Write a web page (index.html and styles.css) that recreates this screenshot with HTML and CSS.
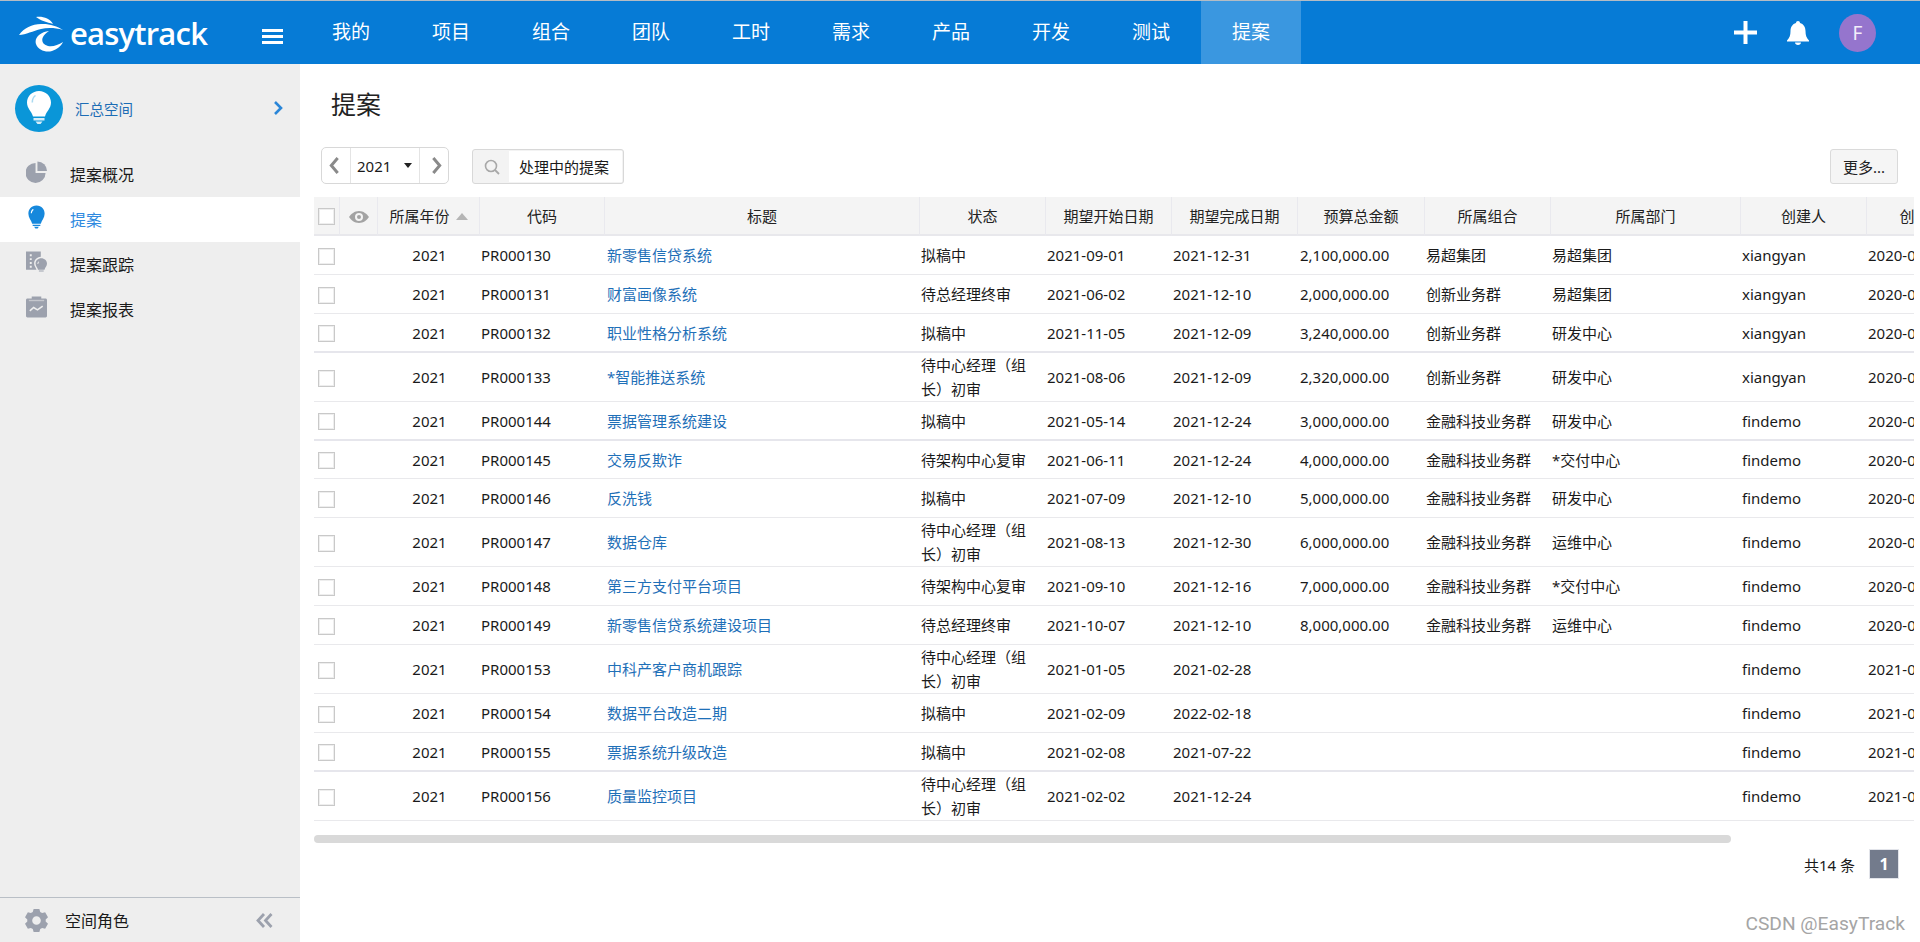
FILE: index.html
```html
<!DOCTYPE html>
<html lang="zh-CN">
<head>
<meta charset="utf-8">
<title>提案 - EasyTrack</title>
<link rel="stylesheet" href="styles.css">
</head>
<body>
<div class="app">
  <header class="topbar">
    <div class="brand">
      <svg class="brand-mark" viewBox="0 0 44 36" aria-hidden="true">
        <path fill="#fff" d="M17 1C23 0 31 2 34 8 28 6 22 5 17 1Z"/>
        <path fill="#fff" d="M0 19C5 12 13 8 22 8 30 7.500 38 10 44 14 36 11.500 28 11.500 22 13 14 15 7 18.500 0 19Z"/>
        <path fill="#fff" d="M30 15C21 16 15 22 17 28 19 34 27 37 33 35 38 33.500 42 30 44 26 39 29 34 31 29 30 24 29 22 25 24 21 25 19 27 17 30 15Z"/>
      </svg>
      <span class="brand-name">easytrack</span>
    </div>
    <button class="burger" aria-label="菜单"><i></i><i></i><i></i></button>
    <nav class="mainnav">
      <a class="nav-item">我的</a>
      <a class="nav-item">项目</a>
      <a class="nav-item">组合</a>
      <a class="nav-item">团队</a>
      <a class="nav-item">工时</a>
      <a class="nav-item">需求</a>
      <a class="nav-item">产品</a>
      <a class="nav-item">开发</a>
      <a class="nav-item">测试</a>
      <a class="nav-item is-active">提案</a>
    </nav>
    <div class="top-actions">
      <svg class="icon-plus" viewBox="0 0 23 23" aria-hidden="true"><path fill="#fff" d="M9.500 0h4v9.500H23v4h-9.500V23h-4v-9.500H0v-4h9.500Z"/></svg>
      <svg class="icon-bell" viewBox="0 0 22 24" aria-hidden="true"><path fill="#fff" d="M11 0c1.200 0 2 .8 2 1.900C16.500 2.800 18.500 6 18.500 10c0 4.500 1 7 3.500 9.500v1H0v-1C2.500 17 3.500 14.500 3.500 10 3.500 6 5.500 2.800 9 1.900 9 .8 9.800 0 11 0ZM8 21.500h6C14 23 12.700 24 11 24s-3-1-3-2.500Z"/></svg>
      <span class="avatar">F</span>
    </div>
  </header>

  <div class="body">
    <aside class="sidebar">
      <div class="space">
        <span class="space-icon">
          <svg viewBox="0 0 24 34" aria-hidden="true">
            <path fill="#fff" d="M12 0C5.500 0 0 5 0 11.500 0 17.500 4.500 20 6 25.500h12C19.500 20 24 17.500 24 11.500 24 5 18.500 0 12 0Z"/>
            <path fill="#0a96d8" opacity=".35" d="M8 4c-2 1.500-3.500 4-3.500 7.500h1.600C6 8.500 7 6 9 5Z"/>
            <path fill="#d7eef9" d="M6.500 27h11v2.500h-11ZM8.500 30.500h7L13.500 33h-3Z"/>
          </svg>
        </span>
        <span class="space-name">汇总空间</span>
        <svg class="space-arrow" viewBox="0 0 10 14" aria-hidden="true"><path fill="none" stroke="#2a86d8" stroke-width="2.600" d="M2 1l6 6-6 6"/></svg>
      </div>
      <ul class="menu">
        <li class="menu-item">
          <svg class="menu-icon" viewBox="0 0 22 22" aria-hidden="true"><path fill="#9ca1ad" d="M10 1.500V12h10.500A10.500 10.500 0 1 1 10 1.500Z"/><path fill="#9ca1ad" d="M12 0a10 10 0 0 1 10 10H12Z"/></svg>
          提案概况
        </li>
        <li class="menu-item is-active">
          <svg class="menu-icon" viewBox="0 0 22 24" aria-hidden="true"><path fill="#1688dc" d="M11 0C5.500 0 2.500 4 2.500 8.500c0 4 3 7 4 10.500h9c1-3.500 4-6.500 4-10.500C19.500 4 16.500 0 11 0Z"/><path fill="#fff" d="M7 3.500C5.500 4.800 5 6.500 5 8h1.200c.1-1.500.8-3 2-3.700Z"/><path fill="#1688dc" d="M7 20.200h8v1.300H7ZM8.500 22.300h5L12.200 24h-2.400Z"/></svg>
          提案
        </li>
        <li class="menu-item">
          <svg class="menu-icon" viewBox="0 0 22 22" aria-hidden="true"><path fill="#9ca1ad" d="M0 0h15.500v5.500C11 6 8.500 9 8.500 12.500c0 2.500 1.500 4 2.500 6.500H0Z"/><path fill="#eee" d="M4 3h2v2H4ZM4 7h2v2H4ZM4 11h2v2H4ZM4 15h2v2H4Z"/><path fill="#9ca1ad" d="M16 7c3.300 0 6 2.400 6 5.500 0 2.700-2 4-2.600 6.500h-6.800C12 16.500 10 15.200 10 12.500 10 9.400 12.700 7 16 7ZM13.500 20h5v1h-5Z"/><path fill="#eee" d="M13 10.500c-.8.800-1 1.800-1 2.500h.9c0-.8.300-1.500 1-2Z"/></svg>
          提案跟踪
        </li>
        <li class="menu-item">
          <svg class="menu-icon" viewBox="0 0 22 22" aria-hidden="true"><path fill="#9ca1ad" d="M1.500 2H6V0h10v2h4.500c.8 0 1.500.7 1.500 1.500v17c0 .8-.7 1.500-1.500 1.500h-19C.7 22 0 21.300 0 20.500v-17C0 2.700.7 2 1.500 2Z"/><path fill="none" stroke="#eee" stroke-width="1.500" d="M3 4.200h16" opacity=".5"/><path fill="none" stroke="#eee" stroke-width="1.700" d="M4 15l4-3.500 4 2.500 5.500-4"/></svg>
          提案报表
        </li>
      </ul>
      <div class="side-foot">
        <svg class="gear" viewBox="0 0 24 24" aria-hidden="true"><path fill="#9ca1ad" fill-rule="evenodd" d="M9 0h6l.9 3.200 2 1.100L21 3.400l3 5.200-2.400 2.300v2.200l2.400 2.300-3 5.200-3.100-.9-2 1.100L15 24H9l-.9-3.200-2-1.100L3 20.600l-3-5.200 2.400-2.300v-2.200L0 8.600l3-5.200 3.100.9 2-1.100ZM12 7.500a4.500 4.500 0 1 0 0 9 4.500 4.500 0 0 0 0-9Z"/></svg>
        <span class="foot-label">空间角色</span>
        <svg class="collapse" viewBox="0 0 17 15" aria-hidden="true"><path fill="none" stroke="#9ca1ad" stroke-width="2.800" d="M8 1L2 7.500 8 14M15.500 1L9.500 7.500l6 6.500"/></svg>
      </div>
    </aside>

    <main class="content">
      <h1 class="page-title">提案</h1>
      <div class="toolbar">
        <div class="stepper">
          <span class="step step-prev"><svg viewBox="0 0 10 16" aria-hidden="true"><path fill="none" stroke="#8a8a8a" stroke-width="2.800" d="M8 1L2 8l6 7"/></svg></span>
          <span class="step-value">2021<i class="caret"></i></span>
          <span class="step step-next"><svg viewBox="0 0 10 16" aria-hidden="true"><path fill="none" stroke="#8a8a8a" stroke-width="2.800" d="M2 1l6 7-6 7"/></svg></span>
        </div>
        <div class="search">
          <span class="search-icon"><svg viewBox="0 0 16 16" aria-hidden="true"><circle cx="7" cy="7" r="5.500" fill="none" stroke="#a8a8a8" stroke-width="1.600"/><path stroke="#a8a8a8" stroke-width="1.800" d="M11 11l4 4"/></svg></span>
          <span class="search-text">处理中的提案</span>
        </div>
        <button class="more">更多...</button>
      </div>

      <div class="table-wrap">
        <table class="grid">
          <colgroup>
            <col class="c-check"><col class="c-eye"><col class="c-year"><col class="c-code"><col class="c-title">
            <col class="c-std"><col class="c-std"><col class="c-std"><col class="c-budget"><col class="c-std">
            <col class="c-dept"><col class="c-std"><col class="c-std">
          </colgroup>
          <thead>
            <tr>
              <th class="chk"><span class="box"></span></th>
              <th><svg class="eye" viewBox="0 0 20 12" aria-hidden="true"><path fill="#a3a3a3" fill-rule="evenodd" d="M10 0c4.500 0 8 3 10 6-2 3-5.500 6-10 6S2 9 0 6c2-3 5.500-6 10-6Zm0 2a4 4 0 1 0 0 8 4 4 0 0 0 0-8Zm0 2a2 2 0 1 1 0 4 2 2 0 0 1 0-4Z"/></svg></th>
              <th>所属年份<i class="sort"></i></th>
              <th>代码</th><th>标题</th><th>状态</th><th>期望开始日期</th><th>期望完成日期</th><th>预算总金额</th><th>所属组合</th><th>所属部门</th><th>创建人</th><th>创建时间</th>
            </tr>
          </thead>
          <tbody>
            <tr><td class="chk"><span class="box"></span></td><td></td><td class="ctr">2021</td><td>PR000130</td><td><a class="link">新零售信贷系统</a></td><td>拟稿中</td><td>2021-09-01</td><td>2021-12-31</td><td>2,100,000.00</td><td>易超集团</td><td>易超集团</td><td>xiangyan</td><td>2020-09-15</td></tr>
            <tr><td class="chk"><span class="box"></span></td><td></td><td class="ctr">2021</td><td>PR000131</td><td><a class="link">财富画像系统</a></td><td>待总经理终审</td><td>2021-06-02</td><td>2021-12-10</td><td>2,000,000.00</td><td>创新业务群</td><td>易超集团</td><td>xiangyan</td><td>2020-09-15</td></tr>
            <tr class="thick"><td class="chk"><span class="box"></span></td><td></td><td class="ctr">2021</td><td>PR000132</td><td><a class="link">职业性格分析系统</a></td><td>拟稿中</td><td>2021-11-05</td><td>2021-12-09</td><td>3,240,000.00</td><td>创新业务群</td><td>研发中心</td><td>xiangyan</td><td>2020-09-15</td></tr>
            <tr class="tall"><td class="chk"><span class="box"></span></td><td></td><td class="ctr">2021</td><td>PR000133</td><td><a class="link">*智能推送系统</a></td><td>待中心经理（组长）初审</td><td>2021-08-06</td><td>2021-12-09</td><td>2,320,000.00</td><td>创新业务群</td><td>研发中心</td><td>xiangyan</td><td>2020-09-15</td></tr>
            <tr class="thick"><td class="chk"><span class="box"></span></td><td></td><td class="ctr">2021</td><td>PR000144</td><td><a class="link">票据管理系统建设</a></td><td>拟稿中</td><td>2021-05-14</td><td>2021-12-24</td><td>3,000,000.00</td><td>金融科技业务群</td><td>研发中心</td><td>findemo</td><td>2020-09-17</td></tr>
            <tr class="short"><td class="chk"><span class="box"></span></td><td></td><td class="ctr">2021</td><td>PR000145</td><td><a class="link">交易反欺诈</a></td><td>待架构中心复审</td><td>2021-06-11</td><td>2021-12-24</td><td>4,000,000.00</td><td>金融科技业务群</td><td>*交付中心</td><td>findemo</td><td>2020-09-17</td></tr>
            <tr><td class="chk"><span class="box"></span></td><td></td><td class="ctr">2021</td><td>PR000146</td><td><a class="link">反洗钱</a></td><td>拟稿中</td><td>2021-07-09</td><td>2021-12-10</td><td>5,000,000.00</td><td>金融科技业务群</td><td>研发中心</td><td>findemo</td><td>2020-09-17</td></tr>
            <tr class="tall"><td class="chk"><span class="box"></span></td><td></td><td class="ctr">2021</td><td>PR000147</td><td><a class="link">数据仓库</a></td><td>待中心经理（组长）初审</td><td>2021-08-13</td><td>2021-12-30</td><td>6,000,000.00</td><td>金融科技业务群</td><td>运维中心</td><td>findemo</td><td>2020-09-17</td></tr>
            <tr><td class="chk"><span class="box"></span></td><td></td><td class="ctr">2021</td><td>PR000148</td><td><a class="link">第三方支付平台项目</a></td><td>待架构中心复审</td><td>2021-09-10</td><td>2021-12-16</td><td>7,000,000.00</td><td>金融科技业务群</td><td>*交付中心</td><td>findemo</td><td>2020-09-17</td></tr>
            <tr><td class="chk"><span class="box"></span></td><td></td><td class="ctr">2021</td><td>PR000149</td><td><a class="link">新零售信贷系统建设项目</a></td><td>待总经理终审</td><td>2021-10-07</td><td>2021-12-10</td><td>8,000,000.00</td><td>金融科技业务群</td><td>运维中心</td><td>findemo</td><td>2020-09-17</td></tr>
            <tr class="tall"><td class="chk"><span class="box"></span></td><td></td><td class="ctr">2021</td><td>PR000153</td><td><a class="link">中科产客户商机跟踪</a></td><td>待中心经理（组长）初审</td><td>2021-01-05</td><td>2021-02-28</td><td></td><td></td><td></td><td>findemo</td><td>2021-01-05</td></tr>
            <tr><td class="chk"><span class="box"></span></td><td></td><td class="ctr">2021</td><td>PR000154</td><td><a class="link">数据平台改造二期</a></td><td>拟稿中</td><td>2021-02-09</td><td>2022-02-18</td><td></td><td></td><td></td><td>findemo</td><td>2021-01-05</td></tr>
            <tr class="thick"><td class="chk"><span class="box"></span></td><td></td><td class="ctr">2021</td><td>PR000155</td><td><a class="link">票据系统升级改造</a></td><td>拟稿中</td><td>2021-02-08</td><td>2021-07-22</td><td></td><td></td><td></td><td>findemo</td><td>2021-01-05</td></tr>
            <tr class="tall"><td class="chk"><span class="box"></span></td><td></td><td class="ctr">2021</td><td>PR000156</td><td><a class="link">质量监控项目</a></td><td>待中心经理（组长）初审</td><td>2021-02-02</td><td>2021-12-24</td><td></td><td></td><td></td><td>findemo</td><td>2021-01-05</td></tr>
          </tbody>
        </table>
      </div>
      <div class="scrollbar"><span class="thumb"></span></div>
      <div class="pager"><span class="total">共14 条</span><span class="page">1</span></div>
    </main>
  </div>
  <div class="watermark">CSDN @EasyTrack</div>
</div>
</body>
</html>
```

FILE: styles.css
```css
* { box-sizing: border-box; }
html, body { margin: 0; height: 100%; }
body {
  font-family: "Noto Sans", "Noto Sans CJK SC", sans-serif;
  font-size: 15px;
  color: #1a1a1a;
  background: #fff;
  overflow: hidden;
}
.app { height: 100vh; display: flex; flex-direction: column; }

/* top bar */
.topbar {
  height: 64px;
  flex: none;
  display: flex;
  background: #067bd6;
  border-top: 1px solid #b4bcc4;
  color: #fff;
}
.brand { width: 262px; display: flex; align-items: center; padding-left: 19px; }
.brand-mark { width: 44px; height: 36px; display: block; margin-top: 2px; }
.brand-name {
  font-family: "Open Sans", sans-serif;
  font-size: 31px;
  font-weight: 600;
  line-height: 40px;
  margin-left: 7px;
  letter-spacing: -0.8px;
}
.burger {
  width: 39px;
  padding: 8px 18px 0 0;
  border: 0;
  background: none;
  display: flex;
  flex-direction: column;
  justify-content: center;
  gap: 3px;
}
.burger i { display: block; width: 21px; height: 3px; background: #fff; }
.mainnav { display: flex; }
.nav-item {
  width: 100px;
  display: flex;
  align-items: center;
  justify-content: center;
  font-size: 19px;
  padding-bottom: 3px;
  color: #fff;
}
.nav-item.is-active { background: #3a97e0; }
.top-actions { margin-left: auto; display: flex; align-items: center; padding-right: 44px; }
.icon-plus { width: 23px; height: 23px; margin-right: 30px; margin-top: -1px; }
.icon-bell { width: 22px; height: 24px; margin-right: 30px; margin-top: 1px; }
.avatar {
  width: 37px;
  height: 38px;
  border-radius: 50%;
  background: #9575cd;
  display: flex;
  align-items: center;
  justify-content: center;
  font-size: 19px;
  color: #f3eefa;
}

/* layout */
.body { flex: 1; display: flex; min-height: 0; }

/* sidebar */
.sidebar { width: 300px; flex: none; background: #eeeeee; display: flex; flex-direction: column; }
.space { height: 88px; display: flex; align-items: center; padding: 0 17px 0 15px; }
.space-icon {
  width: 48px;
  height: 47px;
  border-radius: 50%;
  background: #0a96d8;
  display: flex;
  align-items: center;
  justify-content: center;
}
.space-icon svg { width: 24px; height: 34px; display: block; }
.space-name { margin-left: 12px; font-size: 14.500px; color: #1c6db5; }
.space-arrow { width: 10px; height: 14px; margin-left: auto; }
.menu { list-style: none; margin: 0; padding: 0; flex: 1; }
.menu-item {
  height: 45px;
  display: flex;
  align-items: center;
  font-size: 16px;
  padding: 0 0 2px 26px;
  color: #1a1a1a;
}
.menu-item.is-active { background: #fff; color: #2f8ae0; }
.menu-icon { width: 21px; height: 24px; margin-right: 23px; margin-top: -3px; }
.side-foot {
  height: 45px;
  border-top: 1px solid #b9bfc6;
  display: flex;
  align-items: center;
  padding: 0 27px 0 25px;
}
.gear { width: 23px; height: 23px; }
.foot-label { margin-left: 17px; font-size: 16px; }
.collapse { width: 17px; height: 15px; margin-left: auto; }

/* content */
.content { flex: 1; min-width: 0; padding: 0 6px 0 14px; display: flex; flex-direction: column; }
.page-title {
  margin: 23px 0 0 17px;
  font-size: 25px;
  font-weight: 400;
  line-height: 34px;
  color: #222;
}
.toolbar { display: flex; align-items: flex-end; margin-top: 26px; padding: 0 16px 0 7px; height: 37px; }
.stepper {
  width: 128px;
  height: 37px;
  border: 1px solid #d8d8d8;
  border-radius: 5px;
  display: flex;
}
.step { width: 28px; display: flex; align-items: center; justify-content: center; }
.step-prev { padding-right: 4px; }
.step-next { padding-left: 4px; }
.step svg { width: 11px; height: 17px; display: block; }
.step-value {
  flex: 1;
  border: solid #e4e4e4;
  border-width: 0 1px;
  display: flex;
  align-items: center;
  padding-left: 6px;
  font-size: 15px;
}
.caret {
  margin-left: 13px;
  border: solid transparent;
  border-width: 5px 4px 0;
  border-top-color: #222;
}
.search {
  margin-left: 23px;
  width: 152px;
  height: 35px;
  border: 1px solid #d8d8d8;
  border-radius: 3px;
  background: #f3f3f3;
  display: flex;
  padding: 1px;
}
.search-icon { width: 35px; display: flex; align-items: center; justify-content: center; }
.search-icon svg { width: 16px; height: 16px; }
.search-text { flex: 1; background: #fff; display: flex; align-items: center; padding-left: 10px; font-size: 15px; white-space: nowrap; }
.more {
  margin-left: auto;
  width: 68px;
  height: 35px;
  border: 1px solid #dadada;
  border-radius: 3px;
  background: #f5f5f5;
  font: inherit;
  color: #222;
  padding: 0;
}

/* table */
.table-wrap { margin-top: 13px; overflow: hidden; width: 1600px; flex: none; }
.grid { table-layout: fixed; border-collapse: separate; border-spacing: 0; width: 1679px; }
.c-check { width: 26px; }
.c-eye { width: 38px; }
.c-year { width: 102px; }
.c-code { width: 125px; }
.c-title { width: 315px; }
.c-std { width: 126px; }
.c-budget { width: 127px; }
.c-dept { width: 190px; }
.grid th {
  height: 39px;
  background: #f4f4f4;
  font-weight: 400;
  text-align: center;
  border-right: 1px solid #e9e9ee;
  border-bottom: 2px solid #e8e8ec;
  padding: 0;
  white-space: nowrap;
  color: #222;
}
.grid td {
  height: 39px;
  padding: 0 1px;
  line-height: 24px;
  border-bottom: 1px solid #e9e9ec;
  vertical-align: middle;
  white-space: nowrap;
  overflow: hidden;
}
.grid td:nth-child(5), .grid td:nth-child(9) { padding-left: 2px; }
.grid tr.short td { height: 38px; }
.grid tr.thick td { border-bottom: 2px solid #e6e6ec; }
.grid tr.tall td { height: 49px; white-space: normal; }
.grid .chk { padding: 0 0 0 4px; text-align: left; }
.grid .ctr { text-align: center; padding-left: 2px; }
.box {
  display: block;
  width: 17px;
  height: 17px;
  margin-top: 2px;
  background: #fff;
  border: 1px solid #c9c9c9;
  box-shadow: inset 0 0 0 1px #eee;
}
.eye { width: 20px; height: 12px; display: block; margin: 2px auto 0; }
.sort {
  display: inline-block;
  vertical-align: 2px;
  margin-left: 6px;
  border: solid transparent;
  border-width: 0 6px 7px;
  border-bottom-color: #b5b5b5;
}
.link { color: #1f70b8; }

.scrollbar { margin-top: 14px; height: 8px; width: 1600px; flex: none; }
.thumb { display: block; width: 1417px; height: 8px; border-radius: 4px; background: #d9d9d9; }
.pager { margin-top: 6px; display: flex; justify-content: flex-end; align-items: center; padding-right: 15px; height: 30px; }
.total { margin-right: 14px; font-size: 15px; }
.page {
  width: 30px;
  height: 30px;
  background: #737b8c;
  border: 1px solid #e2e4ea;
  color: #fff;
  font-weight: 700;
  display: flex;
  align-items: center;
  justify-content: center;
  font-size: 16px;
}

/* overlay */
.watermark {
  position: absolute;
  right: 15px;
  bottom: 7px;
  font-family: "Roboto", sans-serif;
  font-size: 19.200px;
  color: #a5a5a5;
}
```
